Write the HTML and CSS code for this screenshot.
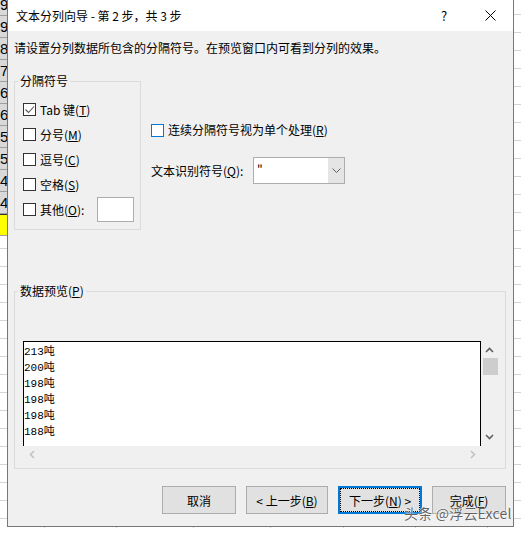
FILE: index.html
```html
<!DOCTYPE html>
<html>
<head>
    <meta charset="UTF-8">
    <title>文本分列向导</title>
    <link rel="stylesheet" href="styles.css">
</head>
<body>
<div class="sheet">
    <div class="row-heads">
        <div class="cell">9</div>
        <div class="cell">9</div>
        <div class="cell">8</div>
        <div class="cell">7</div>
        <div class="cell">6</div>
        <div class="cell">6</div>
        <div class="cell">5</div>
        <div class="cell">5</div>
        <div class="cell">4</div>
        <div class="cell">4</div>
        <div class="cell yellow"></div>
    </div>
</div>

<div class="dialog">
    <div class="titlebar">
        <span class="title">文本分列向导 - 第 2 步，共 3 步</span>
        <span class="help">?</span>
        <span class="close">
            <svg width="11" height="11" viewBox="0 0 11 11"><path d="M0.5 0.5 L10.5 10.5 M10.5 0.5 L0.5 10.5" stroke="#000" stroke-width="1" fill="none"/></svg>
        </span>
    </div>

    <div class="body">
        <p class="intro">请设置分列数据所包含的分隔符号。在预览窗口内可看到分列的效果。</p>

        <div class="top-row">
            <fieldset class="group delims">
                <legend>分隔符号</legend>
                <div class="check-row">
                    <span class="box">
                        <svg width="11" height="11" viewBox="0 0 11 11"><path d="M1.5 5.5 L4.5 8.5 L10 2.5" stroke="#555" stroke-width="1.1" fill="none"/></svg>
                    </span>
                    <span class="lbl">Tab 键(<u>T</u>)</span>
                </div>
                <div class="check-row"><span class="box"></span><span class="lbl">分号(<u>M</u>)</span></div>
                <div class="check-row"><span class="box"></span><span class="lbl">逗号(<u>C</u>)</span></div>
                <div class="check-row"><span class="box"></span><span class="lbl">空格(<u>S</u>)</span></div>
                <div class="check-row">
                    <span class="box"></span><span class="lbl">其他(<u>O</u>):</span>
                    <span class="other-input"></span>
                </div>
            </fieldset>

            <div class="options">
                <div class="check-row single">
                    <span class="box focus"></span><span class="lbl">连续分隔符号视为单个处理(<u>R</u>)</span>
                </div>
                <div class="qualifier">
                    <span class="q-label">文本识别符号(<u>Q</u>):</span>
                    <div class="select">
                        <span class="value">"</span>
                        <span class="drop">
                            <svg width="9" height="5" viewBox="0 0 9 5"><path d="M0.5 0.5 L4.5 4.5 L8.5 0.5" stroke="#606060" stroke-width="1" fill="none"/></svg>
                        </span>
                    </div>
                </div>
            </div>
        </div>

        <fieldset class="group preview">
            <legend>数据预览(<u>P</u>)</legend>
            <div class="preview-grid">
                <div class="preview-text">
                    <div>213吨</div>
                    <div>200吨</div>
                    <div>198吨</div>
                    <div>198吨</div>
                    <div>198吨</div>
                    <div>188吨</div>
                </div>
                <div class="vscroll">
                    <svg class="arrow" width="9" height="6" viewBox="0 0 9 6"><path d="M1 5 L4.5 1.5 L8 5" stroke="#606060" stroke-width="1.6" fill="none"/></svg>
                    <div class="thumb"></div>
                    <svg class="arrow down" width="9" height="6" viewBox="0 0 9 6"><path d="M1 1 L4.5 4.5 L8 1" stroke="#606060" stroke-width="1.6" fill="none"/></svg>
                </div>
                <div class="hscroll">
                    <svg width="6" height="9" viewBox="0 0 6 9"><path d="M5 1 L1.5 4.5 L5 8" stroke="#c2c2c2" stroke-width="1.6" fill="none"/></svg>
                    <svg width="6" height="9" viewBox="0 0 6 9"><path d="M1 1 L4.5 4.5 L1 8" stroke="#c2c2c2" stroke-width="1.6" fill="none"/></svg>
                </div>
                <div class="corner"></div>
            </div>
        </fieldset>

        <div class="buttons">
            <button class="btn cancel">取消</button>
            <button class="btn back">&lt; 上一步(<u>B</u>)</button>
            <button class="btn next"><span class="focus-ring">下一步(<u>N</u>) &gt;</span></button>
            <button class="btn finish">完成(<u>F</u>)</button>
        </div>
    </div>

    <div class="watermark">头条 @浮云Excel</div>
</div>
</body>
</html>
```

FILE: styles.css
```css
body {
    margin: 0;
    padding: 0;
    width: 521px;
    height: 534px;
    overflow: hidden;
    position: relative;
    font-family: "Noto Sans CJK SC", "Liberation Sans", sans-serif;
    font-size: 12px;
    color: #000000;
}

.sheet {
    width: 521px;
    height: 534px;
    background-color: #FFFFFF;
    background-image:
        linear-gradient(#D4D4D4, #D4D4D4),
        linear-gradient(#D4D4D4, #D4D4D4),
        linear-gradient(#D4D4D4, #D4D4D4),
        linear-gradient(#D4D4D4, #D4D4D4),
        linear-gradient(#D4D4D4, #D4D4D4),
        linear-gradient(#D4D4D4, #D4D4D4),
        linear-gradient(#D4D4D4, #D4D4D4),
        repeating-linear-gradient(to bottom, transparent 0, transparent 2px, #D4D4D4 2px, #D4D4D4 3px, transparent 3px, transparent 18px);
    background-size: 1px 100%, 1px 100%, 1px 100%, 1px 100%, 1px 100%, 1px 100%, 1px 100%, 100% 100%;
    background-position: 44px 0, 116px 0, 193px 0, 270px 0, 343px 0, 415px 0, 487px 0, 0 0;
    background-repeat: no-repeat;
}

.row-heads {
    width: 7px;
    margin-top: -6px;
    overflow: hidden;
}

.row-heads .cell {
    height: 22px;
    box-sizing: border-box;
    background-color: #D9D9D9;
    border-bottom: 1px solid #9E9E9E;
    font-family: "Liberation Sans", sans-serif;
    font-size: 15px;
    line-height: 21px;
    white-space: nowrap;
}

.row-heads .cell.yellow {
    background-color: #FFFF00;
    border-top: 1px solid #333333;
    border-bottom: 1px solid #9E9E9E;
}

/* dialog window */
.dialog {
    position: absolute;
    top: 0;
    left: 7px;
    width: 507px;
    height: 527px;
    box-sizing: border-box;
    border: 1px solid #777777;
    border-top: none;
    display: flex;
    flex-direction: column;
}

.titlebar {
    height: 31px;
    background-color: #FFFFFF;
    display: flex;
    align-items: center;
    padding-left: 8px;
    flex-shrink: 0;
}

.title {
    line-height: 16px;
}

.help {
    margin-left: auto;
    width: 46px;
    text-align: center;
    font-size: 13px;
}

.close {
    width: 46px;
    height: 31px;
    display: flex;
    align-items: center;
    justify-content: center;
}

.body {
    flex: 1;
    background-color: #F0F0F0;
    padding: 9px 7px 0 6px;
}

.intro {
    margin: 0;
    line-height: 16px;
}

.top-row {
    display: flex;
    margin-top: 17px;
}

.group {
    margin: 0;
    border: 1px solid #DCDCDC;
    min-width: 0;
}

.group legend {
    padding: 0 2px;
    margin-left: -5px;
    line-height: 16px;
}

.delims {
    width: 127px;
    box-sizing: border-box;
    padding: 8px 6px 7px 8px;
}

.check-row {
    display: flex;
    align-items: center;
    height: 25px;
}

.box {
    width: 13px;
    height: 13px;
    box-sizing: border-box;
    border: 1px solid #333333;
    background-color: #FFFFFF;
    display: flex;
    align-items: center;
    justify-content: center;
    flex-shrink: 0;
}

.box.focus {
    border-color: #0078D7;
}

.lbl {
    margin-left: 4px;
    line-height: 16px;
    white-space: nowrap;
}

.other-input {
    margin-left: auto;
    width: 37px;
    height: 25px;
    box-sizing: border-box;
    border: 1px solid #ADADAD;
    background-color: #FFFFFF;
}

.options {
    margin-left: 10px;
    padding-top: 49px;
}

.check-row.single {
    height: 16px;
}

.qualifier {
    display: flex;
    align-items: center;
    margin-top: 19px;
}

.q-label {
    width: 102px;
    line-height: 16px;
    white-space: nowrap;
}

.select {
    width: 92px;
    height: 27px;
    box-sizing: border-box;
    border: 1px solid #ADADAD;
    background-color: #FFFFFF;
    display: flex;
}

.select .value {
    flex: 1;
    padding-left: 3px;
    line-height: 22px;
}

.select .drop {
    width: 16px;
    background-color: #E5E5E5;
    display: flex;
    align-items: center;
    justify-content: center;
}

.preview {
    margin-top: 53px;
    padding: 42px 7px 6px 8px;
}

.preview-grid {
    display: grid;
    grid-template-columns: 1fr 17px;
    grid-template-rows: 105px 16px;
}

.preview-text {
    background-color: #FFFFFF;
    border: 1px solid #000000;
    border-bottom: none;
    padding-top: 2px;
    font-family: "Liberation Mono", "Noto Sans CJK SC", monospace;
    font-size: 11px;
    line-height: 16px;
}

.vscroll {
    display: flex;
    flex-direction: column;
    align-items: center;
    padding-top: 6px;
}

.vscroll .thumb {
    width: 15px;
    margin-left: 2px;
    height: 17px;
    margin-top: 5px;
    background-color: #CDCDCD;
}

.vscroll .arrow.down {
    margin-top: auto;
    margin-bottom: 6px;
}

.hscroll {
    display: flex;
    align-items: center;
    justify-content: space-between;
    padding: 0 5px 0 6px;
}

.buttons {
    display: flex;
    justify-content: flex-end;
    gap: 10px;
    margin-top: 17px;
}

.btn {
    height: 28px;
    box-sizing: border-box;
    background-color: #E1E1E1;
    border: 1px solid #ADADAD;
    font-family: "Noto Sans CJK SC", "Liberation Sans", sans-serif;
    font-size: 12px;
    color: #000000;
    padding: 0;
}

.cancel { width: 74px; }
.back { width: 82px; }
.finish { width: 74px; }

.next {
    width: 84px;
    border: 2px solid #0078D7;
    padding: 1px;
    display: flex;
}

.focus-ring {
    flex: 1;
    outline: 1px dotted #000000;
    display: flex;
    align-items: center;
    justify-content: center;
}

.watermark {
    position: absolute;
    left: 396px;
    top: 504px;
    font-size: 14px;
    line-height: 18px;
    letter-spacing: 0.2px;
    color: rgba(70, 70, 70, 0.85);
    text-shadow: 0 0 2px #FFFFFF, 0 0 1px #FFFFFF;
    white-space: nowrap;
}
```
